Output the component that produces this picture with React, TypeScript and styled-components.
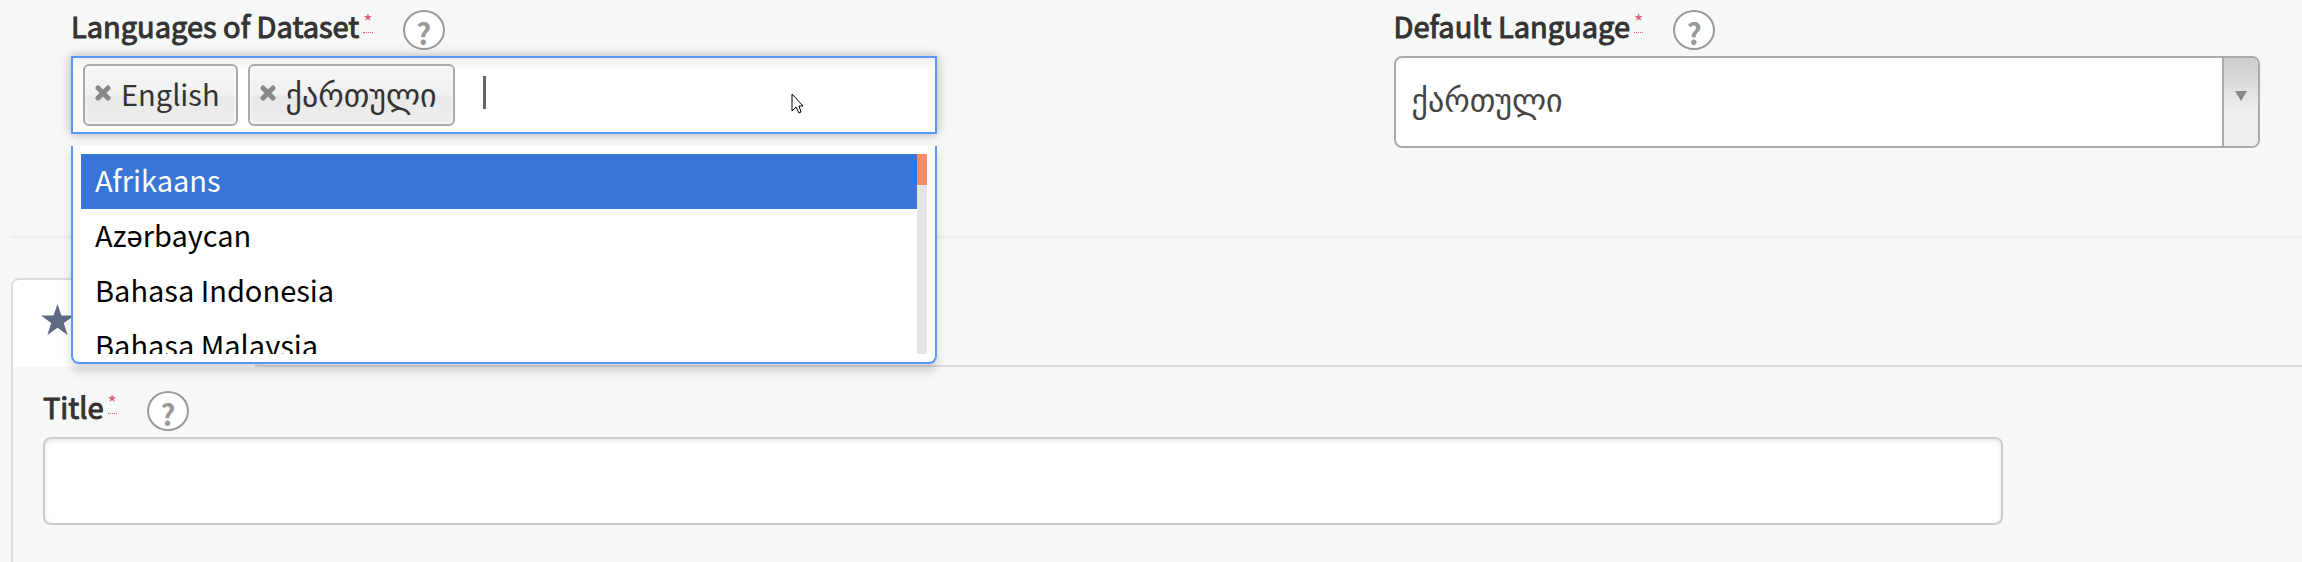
import React from 'react';
import styled, { createGlobalStyle, css } from 'styled-components';

const GlobalStyle = createGlobalStyle`
  *, *::before, *::after { box-sizing: border-box; }
  html, body { margin: 0; background: #f6f8f7; }
  body, input, select, button {
    font-family: 'Noto Sans CJK SC', 'Noto Sans', 'DejaVu Sans', sans-serif;
    font-size: 29px;
    line-height: 40px;
    color: #333;
  }
`;

const Page = styled.main`
  overflow-x: hidden;
  min-height: 100vh;
  display: flex;
  flex-direction: column;
`;

const LanguageRow = styled.section`
  display: grid;
  grid-template-columns: 19fr 10fr 19fr;
  margin-left: 11px;
  padding: 6px 42px 88px 60px;
  border-bottom: 2px solid #eee;
`;

const Field = styled.div<{ $column?: number }>`
  position: relative;
  min-width: 0;
  grid-column: ${({ $column }) => $column ?? 'auto'};
`;

const LabelRow = styled.div`
  display: flex;
  align-items: flex-start;
  height: 50px;
`;

const Label = styled.label`
  -webkit-text-stroke: 1px #333;
  line-height: 38px;
  white-space: nowrap;
`;

const Required = styled.abbr`
  height: 27px;
  margin: 0 30px 0 4px;
  border-bottom: 1px dotted #e0566c;
  color: #e0566c;
  font-size: 20px;
  line-height: 32px;
  text-decoration: none;
`;

const HelpButton = styled.button`
  display: flex;
  justify-content: center;
  width: 42px;
  height: 40px;
  margin-top: 4px;
  padding: 0;
  border: 2px solid #999;
  border-radius: 50%;
  background: #fff;
  color: #999;
  font-weight: bold;
  line-height: 40px;
`;

const MultiSelect = styled.div`
  display: flex;
  align-items: center;
  gap: 10px;
  height: 78px;
  padding: 0 10px;
  border: 2px solid #5897fb;
  background: #fff linear-gradient(#eee, #fff 12px) no-repeat;
  box-shadow: 0 0 10px rgba(0, 0, 0, 0.3);
`;

const Chip = styled.span<{ $georgian: boolean }>`
  display: flex;
  align-items: center;
  gap: 10px;
  height: 62px;
  padding: 0 16px 4px 10px;
  border: 2px solid #aaa;
  border-radius: 6px;
  background: linear-gradient(#f4f4f4 20%, #f0f0f0 50%, #e8e8e8 52%, #eee);
  box-shadow: inset 0 0 4px #fff;
  font-size: ${({ $georgian }) => ($georgian ? 32 : 29)}px;
  white-space: nowrap;
`;

const RemoveButton = styled.button`
  display: flex;
  padding: 0;
  border: 0;
  background: none;
`;

const Caret = styled.span`
  width: 3px;
  height: 33px;
  margin: 0 0 6px 18px;
  background: #666;
`;

const SearchInput = styled.input`
  flex: 1;
  min-width: 0;
  border: 0;
  padding: 0;
  outline: 0;
  background: none;
`;

const Pointer = styled.svg`
  position: absolute;
  left: 83%;
  top: 86px;
`;

const Dropdown = styled.div`
  position: absolute;
  z-index: 2;
  top: 140px;
  left: 0;
  right: 0;
  display: flex;
  height: 218px;
  padding: 8px;
  border: 2px solid #5897fb;
  border-top: 0;
  border-radius: 0 0 8px 8px;
  background: #fff;
  box-shadow: 0 8px 10px rgba(0, 0, 0, 0.15);
`;

const OptionList = styled.ul`
  flex: 1;
  height: 200px;
  margin: 0;
  padding: 0;
  overflow: hidden;
  list-style: none;
`;

const Option = styled.li<{ $active?: boolean }>`
  height: 55px;
  padding: 5px 14px;
  color: #000;
  ${({ $active }) => $active && css`
    background: #3875d7;
    color: #fff;
  `}
`;

const ScrollTrack = styled.div`
  width: 10px;
  height: 200px;
  background: #e5e5e5;
`;

const ScrollThumb = styled.div`
  height: 31px;
  background: #f08d66;
`;

const SelectBox = styled.div`
  display: grid;
  grid-template-columns: 1fr 36px;
  height: 92px;
  border: 2px solid #aaa;
  border-radius: 8px;
  background: #fff;
  overflow: hidden;
`;

const NativeSelect = styled.select`
  grid-area: 1 / 1 / 2 / 3;
  appearance: none;
  padding: 0 54px 8px 16px;
  border: 0;
  outline: 0;
  background: transparent;
  color: #444;
  font-size: 32px;
  line-height: 56px;
`;

const ArrowCell = styled.span`
  grid-area: 1 / 2;
  display: flex;
  justify-content: center;
  align-items: flex-start;
  padding-top: 33px;
  border-left: 2px solid #aaa;
  background: linear-gradient(#ccc, #eee 60%);
  pointer-events: none;
`;

const TabBar = styled.div`
  display: flex;
  margin: 40px 0 0 11px;
  height: 89px;
  border-bottom: 2px solid #ddd;
`;

const Tab = styled.button`
  display: flex;
  align-items: flex-start;
  width: 246px;
  height: 89px;
  padding: 24px 28px;
  border: 2px solid #ddd;
  border-bottom: 0;
  border-radius: 8px 8px 0 0;
  background: #fff;
`;

const TabPanel = styled.section`
  flex: 1;
  margin-left: 11px;
  padding: 20px 6px 37px 30px;
  border-left: 2px solid #ddd;
`;

const TitleInput = styled.input`
  display: block;
  width: 87%;
  height: 88px;
  padding: 0 14px;
  border: 2px solid #ccc;
  border-radius: 8px;
  background: #fff;
  box-shadow: inset 0 2px 4px rgba(0, 0, 0, 0.1);
`;

const RemoveIcon = () => (
  <svg width="16" height="16" viewBox="0 0 16 16" aria-hidden="true">
    <path d="M3 3L13 13M13 3L3 13" stroke="#888" strokeWidth="5" strokeLinecap="round" />
  </svg>
);

const selected = [
  { name: 'English', georgian: false },
  { name: 'ქართული', georgian: true },
];
const options = ['Afrikaans', 'Azərbaycan', 'Bahasa Indonesia', 'Bahasa Malaysia'];

const FieldLabel = ({ id, text }: { id: string; text: string }) => (
  <LabelRow>
    <Label htmlFor={id}>{text}</Label>
    <Required title="Required">*</Required>
    <HelpButton type="button">?</HelpButton>
  </LabelRow>
);

export default function App() {
  return (
    <Page>
      <GlobalStyle />
      <LanguageRow>
        <Field>
          <FieldLabel id="languages" text="Languages of Dataset" />
          <MultiSelect>
            {selected.map(({ name, georgian }) => (
              <Chip key={name} $georgian={georgian}>
                <RemoveButton type="button" aria-label={`Remove ${name}`}>
                  <RemoveIcon />
                </RemoveButton>
                {name}
              </Chip>
            ))}
            <Caret />
            <SearchInput id="languages" type="text" />
          </MultiSelect>
          <Dropdown>
            <OptionList role="listbox" aria-label="Languages">
              {options.map((name, i) => (
                <Option key={name} role="option" aria-selected={i === 0} $active={i === 0}>
                  {name}
                </Option>
              ))}
            </OptionList>
            <ScrollTrack>
              <ScrollThumb />
            </ScrollTrack>
          </Dropdown>
          <Pointer width="16" height="24" viewBox="0 0 16 24" aria-hidden="true">
            <path d="M2 2V19L6 15L9 21L11 20L9 14H13Z" fill="#fff" stroke="#000" />
          </Pointer>
        </Field>
        <Field $column={3}>
          <FieldLabel id="default-language" text="Default Language" />
          <SelectBox>
            <NativeSelect id="default-language">
              <option>ქართული</option>
            </NativeSelect>
            <ArrowCell>
              <svg width="12" height="10" viewBox="0 0 12 10" aria-hidden="true">
                <path d="M0 0H12L6 10Z" fill="#888" />
              </svg>
            </ArrowCell>
          </SelectBox>
        </Field>
      </LanguageRow>
      <TabBar role="tablist">
        <Tab type="button" role="tab" aria-selected="true" aria-label="Main">
          <svg width="33" height="31" viewBox="0 0 33 31" aria-hidden="true">
            <path d="M16.5 0L20.4 11.6H33L22.8 19L26.6 31L16.5 23.7L6.4 31L10.2 19L0 11.6H12.6Z" fill="#5d6b80" />
          </svg>
        </Tab>
      </TabBar>
      <TabPanel>
        <FieldLabel id="title" text="Title" />
        <TitleInput id="title" type="text" />
      </TabPanel>
    </Page>
  );
}
